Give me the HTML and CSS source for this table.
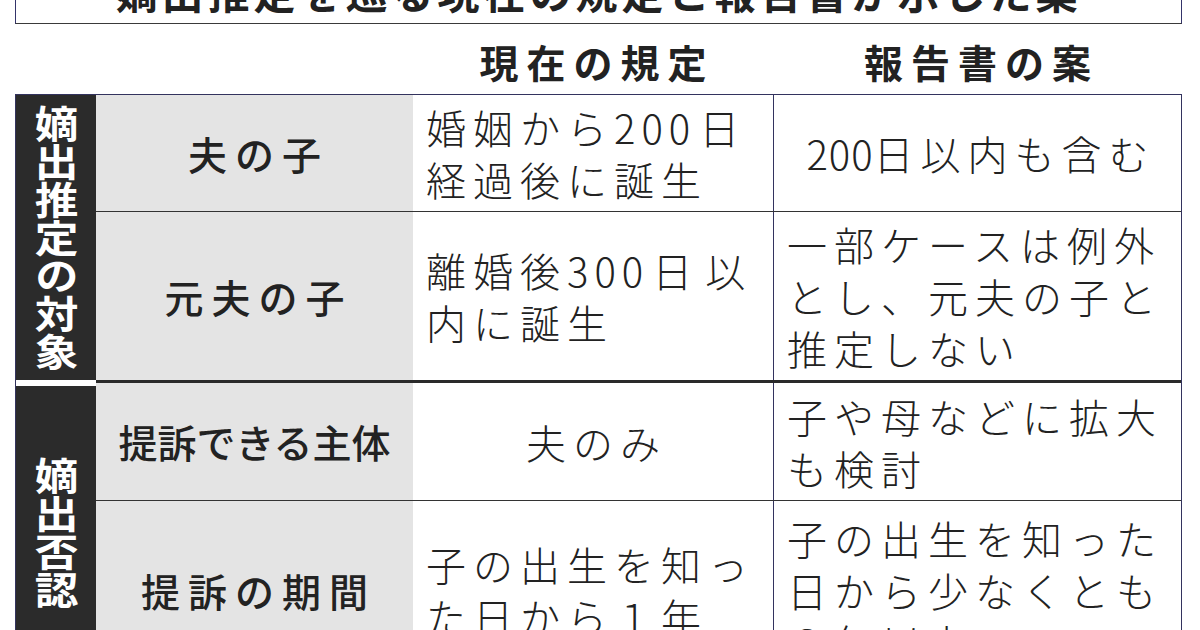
FILE: index.html
```html
<!DOCTYPE html>
<html lang="ja">
<head>
<meta charset="utf-8">
<title>嫡出推定を巡る現在の規定と報告書が示した案</title>
<link rel="stylesheet" href="styles.css">
</head>
<body>
<div class="page">
  <div class="title-box"><h1 class="title">嫡出推定を巡る現在の規定と報告書が示した案</h1></div>

  <div class="heads">
    <div class="head-spacer"></div>
    <div class="head">現在の規定</div>
    <div class="head">報告書の案</div>
  </div>

  <div class="table">
    <div class="group">
      <div class="side"><span class="side-text">嫡出推定の対象</span></div>
      <div class="rows">
        <div class="row row-1">
          <div class="label spaced">夫の子</div>
          <div class="cell"><div class="txt">婚姻から<span class="num wide">200</span>日<br>経過後に誕生</div></div>
          <div class="cell c3 center"><div class="txt"><span class="num">200</span>日以内も含む</div></div>
        </div>
        <div class="row row-2">
          <div class="label spaced">元夫の子</div>
          <div class="cell"><div class="txt">離婚後<span class="num wide">300</span>日<span class="gap"></span>以<br>内に誕生</div></div>
          <div class="cell c3"><div class="txt">一部ケースは例外<br>とし、元夫の子と<br>推定しない</div></div>
        </div>
      </div>
    </div>

    <div class="group group-2">
      <div class="side side-2"><span class="side-text">嫡出否認</span></div>
      <div class="rows rows-2">
        <div class="row row-3">
          <div class="label">提訴できる主体</div>
          <div class="cell center"><div class="txt">夫のみ</div></div>
          <div class="cell c3"><div class="txt">子や母などに拡大<br>も検討</div></div>
        </div>
        <div class="row row-4">
          <div class="label spaced">提訴の期間</div>
          <div class="cell"><div class="txt">子の出生を知っ<br>た日から１年</div></div>
          <div class="cell c3"><div class="txt">子の出生を知った<br>日から少なくとも<br>３年以上</div></div>
        </div>
      </div>
    </div>
  </div>
</div>
</body>
</html>
```

FILE: styles.css
```css
html, body {
  margin: 0;
  padding: 0;
  background: #ffffff;
  overflow: hidden;
}

body {
  font-family: "Noto Sans CJK JP", "Noto Sans CJK SC", sans-serif;
  color: #2a2a2a;
}

.page {
  width: 1200px;
  height: 630px;
  padding: 0 18px 0 15px;
  box-sizing: border-box;
  overflow: hidden;
}

/* title box (mostly cut off at top) */
.title-box {
  margin-top: -34px;
  border: 1px solid #3a3a3a;
  border-left-color: #34346a;
  border-right-color: #34346a;
  padding-bottom: 8px;
}

.title {
  margin: 0;
  font-size: 42px;
  line-height: 48px;
  font-weight: 700;
  letter-spacing: 4px;
  text-align: center;
  color: #222;
}

/* column headings */
.heads {
  display: grid;
  grid-template-columns: 398px 360px 409px;
  height: 70px;
  box-sizing: border-box;
  padding-top: 4px;
}

.head {
  font-size: 39px;
  line-height: 66px;
  font-weight: 700;
  letter-spacing: 8px;
  padding-left: 8px;
  text-align: center;
  color: #222;
}

/* table */
.table {
  border: 1px solid #33335e;
  border-bottom: none;
}

.group {
  display: flex;
}

.side {
  width: 80px;
  flex: none;
  background: #2b2b2b;
  display: flex;
  align-items: center;
  justify-content: center;
}

.side-2 {
  border-top: 6px solid #ffffff;
}

.side-text {
  writing-mode: vertical-rl;
  font-size: 38px;
  line-height: 1;
  font-weight: 700;
  color: #ffffff;
  transform: scaleX(1.15);
}

.rows {
  flex: 1;
}

.rows-2 {
  border-top: 3px solid #2a2a2a;
}

.row {
  display: grid;
  grid-template-columns: 317px 360px 408px;
}

.row + .row {
  border-top: 1px solid #333;
}

.row-1 { height: 116px; }
.row-2 { height: 168px; }
.row-3 { height: 117px; }
.row-4 { height: 178px; }

.label {
  background: #e4e4e4;
  display: flex;
  align-items: center;
  justify-content: center;
  font-size: 39px;
  line-height: 1;
  font-weight: 500;
  color: #222;
}

.label.spaced {
  letter-spacing: 8px;
  padding-left: 8px;
}

.cell {
  display: flex;
  align-items: center;
  padding-left: 13px;
  font-size: 40px;
  line-height: 52px;
  letter-spacing: 7px;
  font-weight: 300;
  color: #222;
  white-space: nowrap;
}

.cell.center {
  justify-content: center;
  padding-left: 7px;
}

.c3 {
  border-left: 1px solid #33335e;
}

.num {
  letter-spacing: 1px;
}

.num.wide {
  letter-spacing: 6px;
  margin: 0 3px 0 0;
}

.gap {
  display: inline-block;
  width: 6px;
}
```
